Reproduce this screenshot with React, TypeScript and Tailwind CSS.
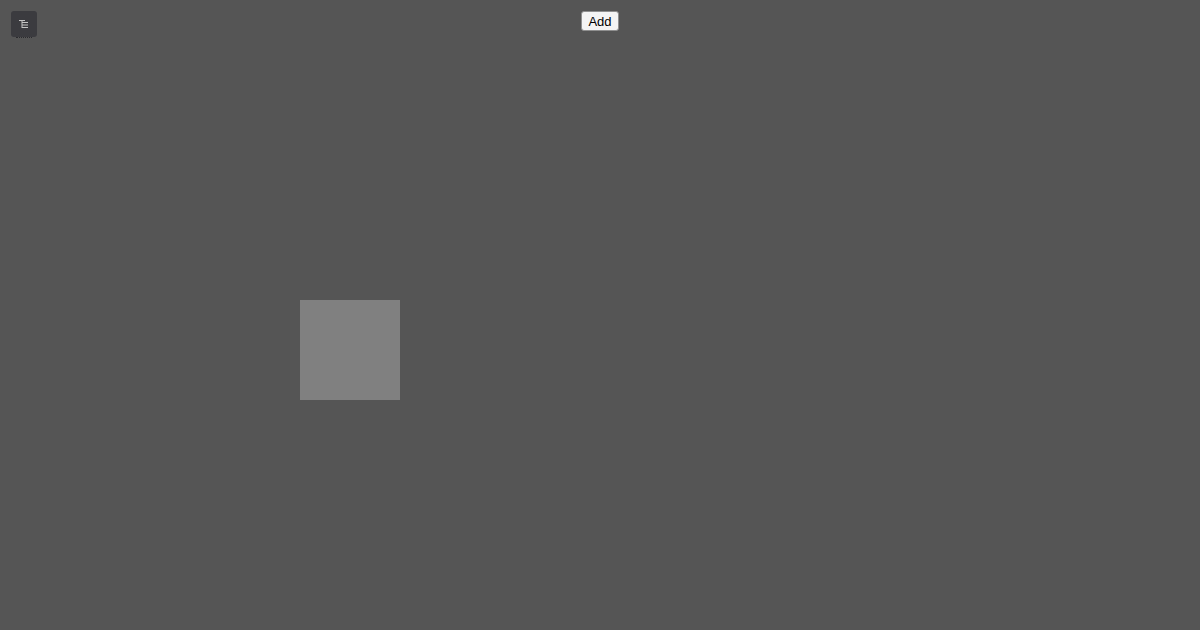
export default function App() {
  return (
    <div className="w-[1200px] h-[630px] bg-[#555555] flex flex-col font-['Liberation_Sans',Arial,sans-serif]">
      {/* Top bar */}
      <div className="relative flex justify-center pt-[11px]">
        <button className="absolute left-[11px] top-[11px] w-[26px] h-[26px] rounded-[3px] bg-[#3b3b3f] flex items-center justify-center">
          <svg width="10" height="10" viewBox="0 0 10 10" fill="none" stroke="#c4c4c4" strokeWidth="1">
            <path d="M0 1.5h6M3 1.5v7.5M3 3.5h6M3 6h6M3 8.5h6" />
          </svg>
          <span className="absolute left-[5px] right-[5px] -bottom-[1px] border-b border-dotted border-[#2a2a2e]" />
        </button>
        <button className="h-[20px] w-[38px] bg-[#f4f4f4] border border-[#8f8f8f] rounded-[3px] text-[13px] leading-none text-black">
          Add
        </button>
      </div>

      {/* Canvas */}
      <div className="flex-1 relative">
        <div className="absolute left-[300px] top-[269px] w-[100px] h-[100px] bg-[#808080]" />
      </div>
    </div>
  )
}
